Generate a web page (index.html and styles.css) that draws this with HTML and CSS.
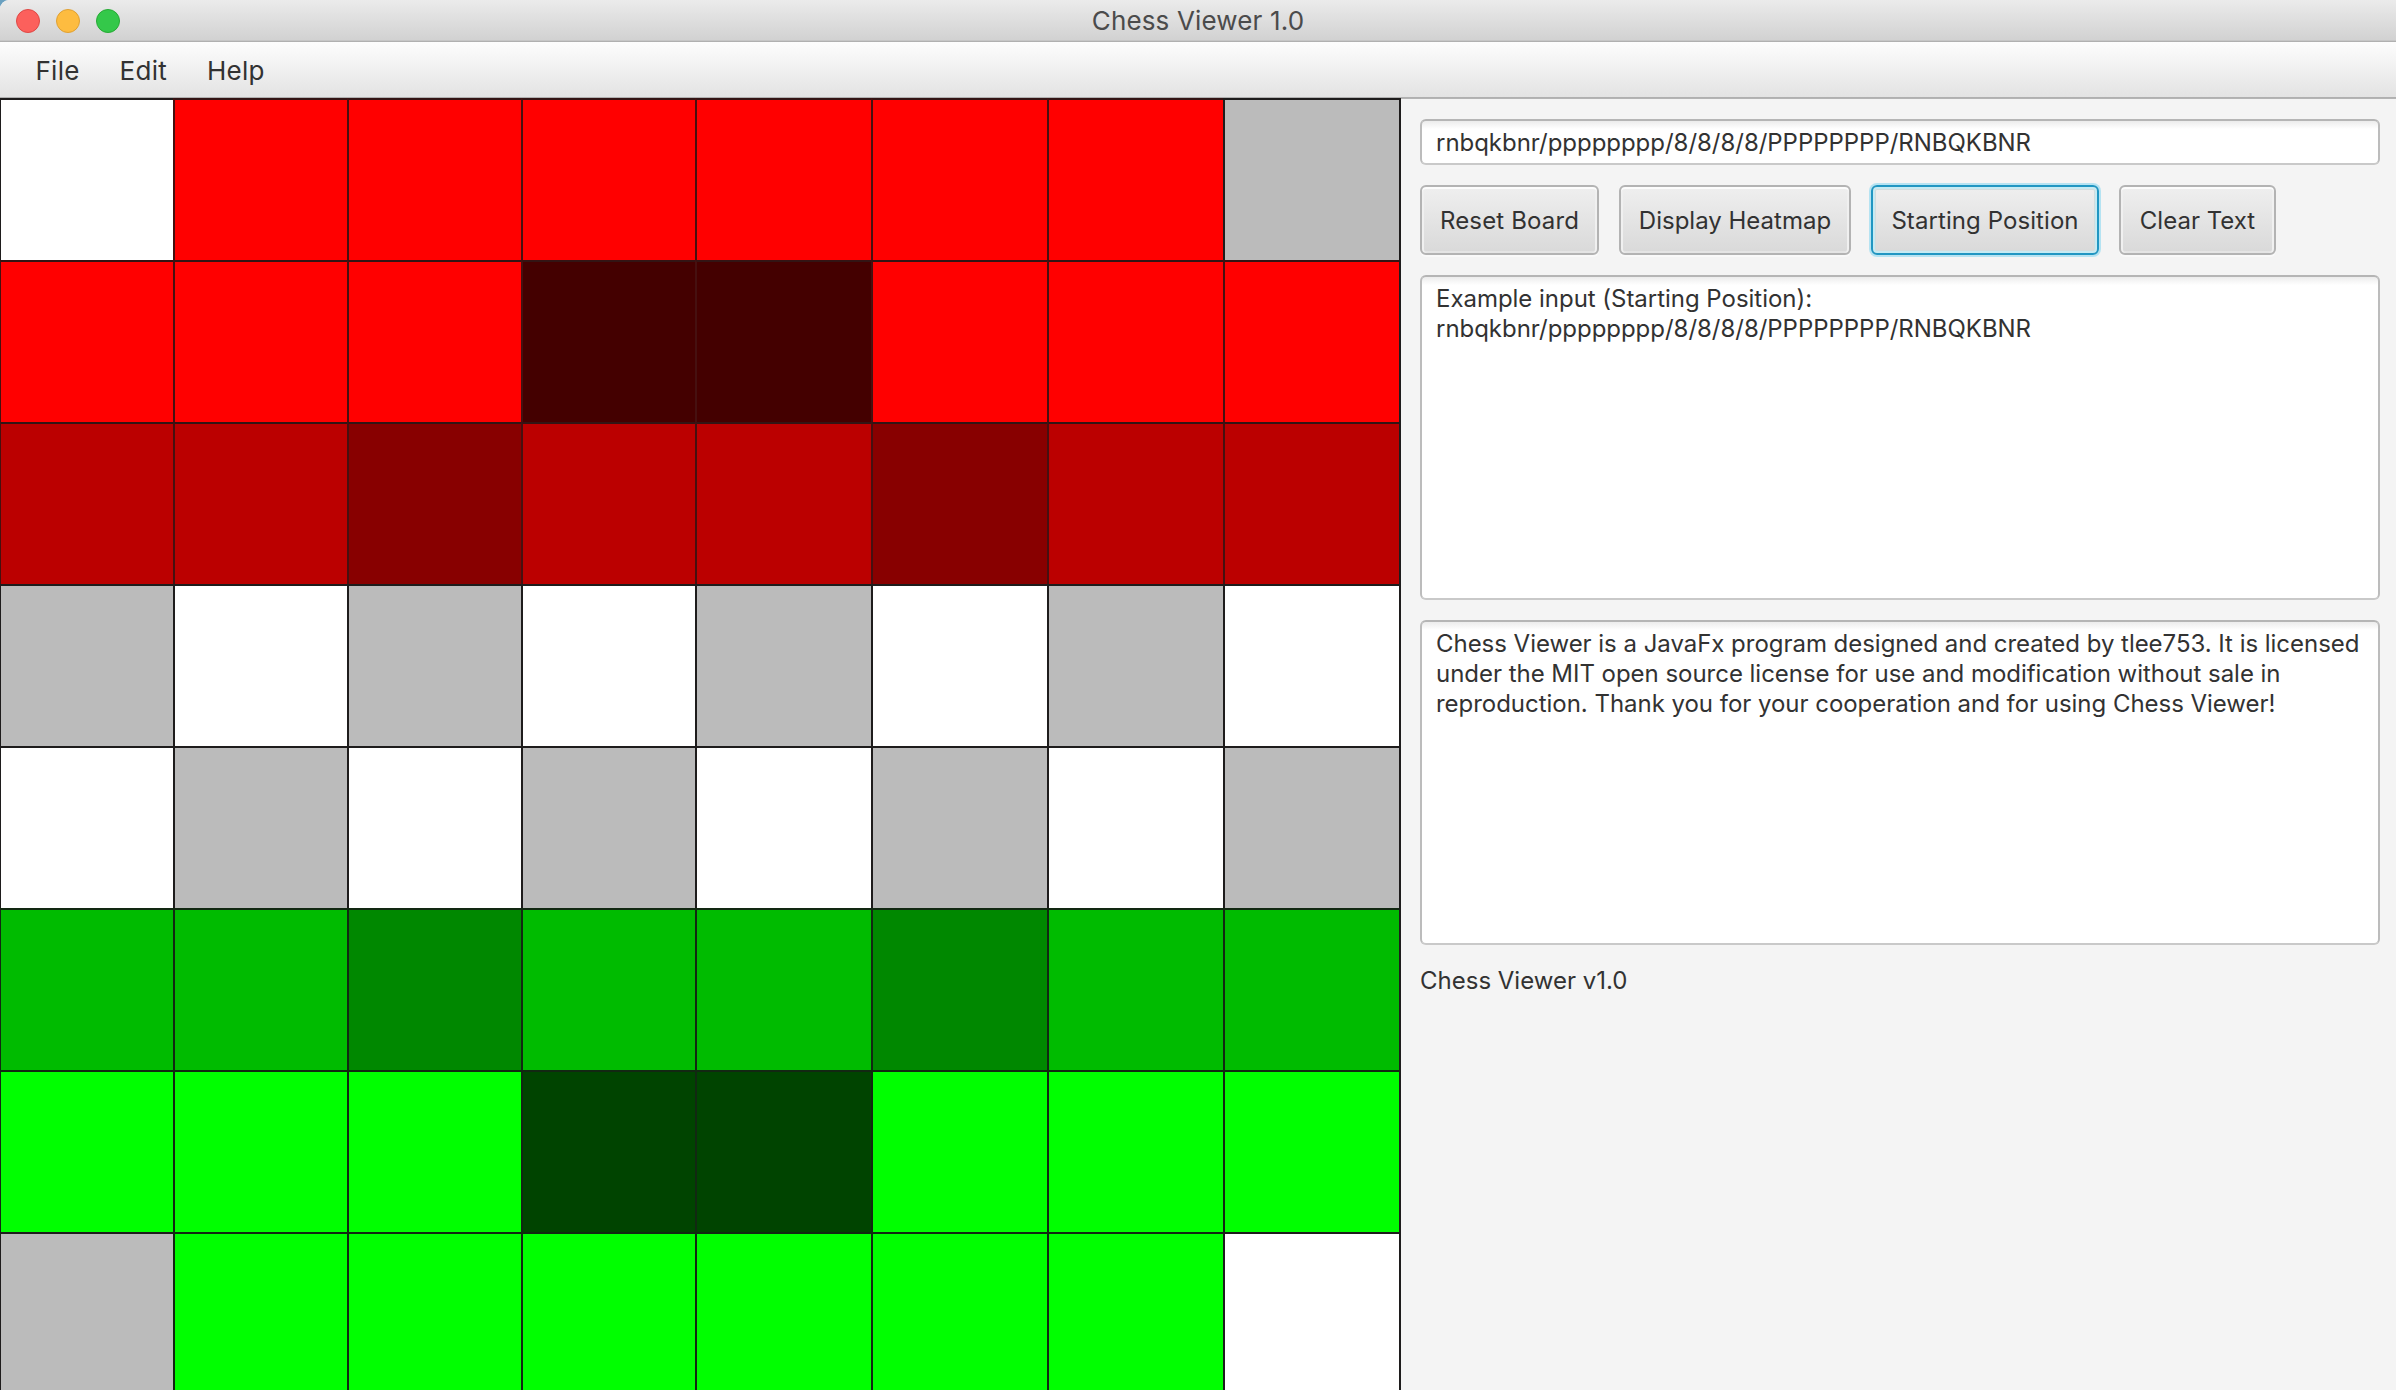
FILE: index.html
```
<!DOCTYPE html>
<html lang="en">
<head>
<meta charset="utf-8">
<title>Chess Viewer 1.0</title>
<link rel="stylesheet" href="styles.css">
</head>
<body>
<div class="window">
  <header class="titlebar">
    <div class="lights">
      <span class="light close"></span>
      <span class="light minimize"></span>
      <span class="light maximize"></span>
    </div>
    <h1 class="title">Chess Viewer 1.0</h1>
  </header>
  <nav class="menubar">
    <span class="menu">File</span>
    <span class="menu">Edit</span>
    <span class="menu">Help</span>
  </nav>
  <main class="content">
    <div class="board">
      <i class="sq light-sq"></i><i class="sq r1"></i><i class="sq r1"></i><i class="sq r1"></i><i class="sq r1"></i><i class="sq r1"></i><i class="sq r1"></i><i class="sq dark-sq"></i>
      <i class="sq r1"></i><i class="sq r1"></i><i class="sq r1"></i><i class="sq r4"></i><i class="sq r4"></i><i class="sq r1"></i><i class="sq r1"></i><i class="sq r1"></i>
      <i class="sq r2"></i><i class="sq r2"></i><i class="sq r3"></i><i class="sq r2"></i><i class="sq r2"></i><i class="sq r3"></i><i class="sq r2"></i><i class="sq r2"></i>
      <i class="sq dark-sq"></i><i class="sq light-sq"></i><i class="sq dark-sq"></i><i class="sq light-sq"></i><i class="sq dark-sq"></i><i class="sq light-sq"></i><i class="sq dark-sq"></i><i class="sq light-sq"></i>
      <i class="sq light-sq"></i><i class="sq dark-sq"></i><i class="sq light-sq"></i><i class="sq dark-sq"></i><i class="sq light-sq"></i><i class="sq dark-sq"></i><i class="sq light-sq"></i><i class="sq dark-sq"></i>
      <i class="sq g2"></i><i class="sq g2"></i><i class="sq g3"></i><i class="sq g2"></i><i class="sq g2"></i><i class="sq g3"></i><i class="sq g2"></i><i class="sq g2"></i>
      <i class="sq g1"></i><i class="sq g1"></i><i class="sq g1"></i><i class="sq g4"></i><i class="sq g4"></i><i class="sq g1"></i><i class="sq g1"></i><i class="sq g1"></i>
      <i class="sq dark-sq"></i><i class="sq g1"></i><i class="sq g1"></i><i class="sq g1"></i><i class="sq g1"></i><i class="sq g1"></i><i class="sq g1"></i><i class="sq light-sq"></i>
    </div>
    <aside class="panel">
      <div class="box field">rnbqkbnr/pppppppp/8/8/8/8/PPPPPPPP/RNBQKBNR</div>
      <div class="buttons">
        <button class="btn reset">Reset Board</button>
        <button class="btn heatmap">Display Heatmap</button>
        <button class="btn start focused">Starting Position</button>
        <button class="btn clear">Clear Text</button>
      </div>
      <div class="box area">Example input (Starting Position):<br>rnbqkbnr/pppppppp/8/8/8/8/PPPPPPPP/RNBQKBNR</div>
      <div class="box area">Chess Viewer is a JavaFx program designed and created by tlee753. It is licensed<br>under the MIT open source license for use and modification without sale in<br>reproduction. Thank you for your cooperation and for using Chess Viewer!</div>
      <div class="version">Chess Viewer v1.0</div>
    </aside>
  </main>
</div>
</body>
</html>
```
FILE: styles.css
```
* { box-sizing: border-box; }

body {
  margin: 0;
  background: #6aa0c0;
  color: #323232;
  font: 24px/30px Inter, "Liberation Sans", sans-serif;
}

.window {
  display: flex;
  flex-direction: column;
  height: 1390px;
  overflow: hidden;
  border-top-left-radius: 9px;
  background: #f4f4f4;
}

/* Title bar */
.titlebar {
  flex: none;
  display: grid;
  grid-template-columns: 1fr auto 1fr;
  align-items: center;
  height: 42px;
  background: linear-gradient(#ebebeb, #d1d1d1);
  border-bottom: 1px solid #b0b0b0;
  box-shadow: inset 0 -1px #c6c6c6;
}
.lights { display: flex; gap: 16px; padding-left: 16px; }
.light { width: 24px; height: 24px; border-radius: 50%; border: 1px solid; }
.close { background: #fc605c; border-color: #de4845; }
.minimize { background: #fdbc40; border-color: #dfa033; }
.maximize { background: #34c84a; border-color: #27aa35; }
.title {
  margin: 0;
  color: #4b4b4b;
  font-size: 26px;
  font-weight: 400;
  line-height: 40px;
  letter-spacing: 0.15px;
}

/* Menu bar */
.menubar {
  flex: none;
  display: flex;
  align-items: center;
  gap: 40px;
  height: 56px;
  padding: 2px 0 0 35.5px;
  background: linear-gradient(#fdfdfd, #e3e3e3);
  border-bottom: 1px solid #b0b0b0;
  font-size: 26px;
  letter-spacing: 0.25px;
}

.content { flex: 1; min-height: 0; display: flex; }

/* Board */
.board {
  flex: none;
  display: grid;
  grid-template-columns: 173px repeat(3, 174px) repeat(4, 176px);
  grid-auto-rows: 162px;
  width: 1401px;
  border-right: 2px solid #1e1c1c;
  overflow: hidden;
}
.sq { border: 0 solid #1e1c1c; border-width: 2px 0 0 2px; }
.sq:nth-child(8n + 1) { border-left-width: 1px; }
.light-sq { background: #fff; }
.dark-sq { background: #bbb; }
.r1 { background: #f00; }
.r2 { background: #b00; }
.r3 { background: #800; }
.r4 { background: #400; }
.g1 { background: #0f0; }
.g2 { background: #0b0; }
.g3 { background: #080; }
.g4 { background: #040; }
.r1, .r2, .r3, .r4 { border-color: #331414; border-left-color: #461010; }
.g1, .g2, .g3, .g4 { border-color: #122812; }

/* Side panel */
.panel {
  flex: 1;
  display: flex;
  flex-direction: column;
  gap: 20px;
  padding: 20px 16px 0 19px;
  border-top: 1px solid #b4b4b4;
}
.box {
  border: 2px solid;
  border-color: #b5b5b5 #bcbcbc #c9c9c9;
  border-radius: 6px;
  background: linear-gradient(#ececec, #fff 8px);
  padding: 7px 0 0 14px;
  white-space: nowrap;
}
.field { height: 46px; letter-spacing: -0.03px; }
.area { height: 325px; letter-spacing: -0.03px; }
.version { padding-top: 1px; }

.buttons { display: flex; gap: 20px; height: 70px; }
.btn {
  padding: 2px 0 0;
  border: 2px solid #b3b3b3;
  border-radius: 6px;
  background: linear-gradient(#efefef, #d9d9d9);
  box-shadow: inset 0 2px #fcfcfc, inset 2px 0 #f0f0f0, inset -2px 0 #f0f0f0, inset 0 -2px #e4e4e4, 0 2px #f9f9f9;
  color: inherit;
  font: inherit;
}
.reset { width: 179px; letter-spacing: 0.15px; }
.heatmap { width: 232px; }
.start { width: 228px; letter-spacing: 0.08px; }
.clear { width: 157px; }
.focused {
  border-color: #2096c2;
  box-shadow: inset 0 0 0 2px #c6eaf2, inset 0 0 0 3px #d2dcde, 0 0 0 2px #b5e3f2;
}
```
